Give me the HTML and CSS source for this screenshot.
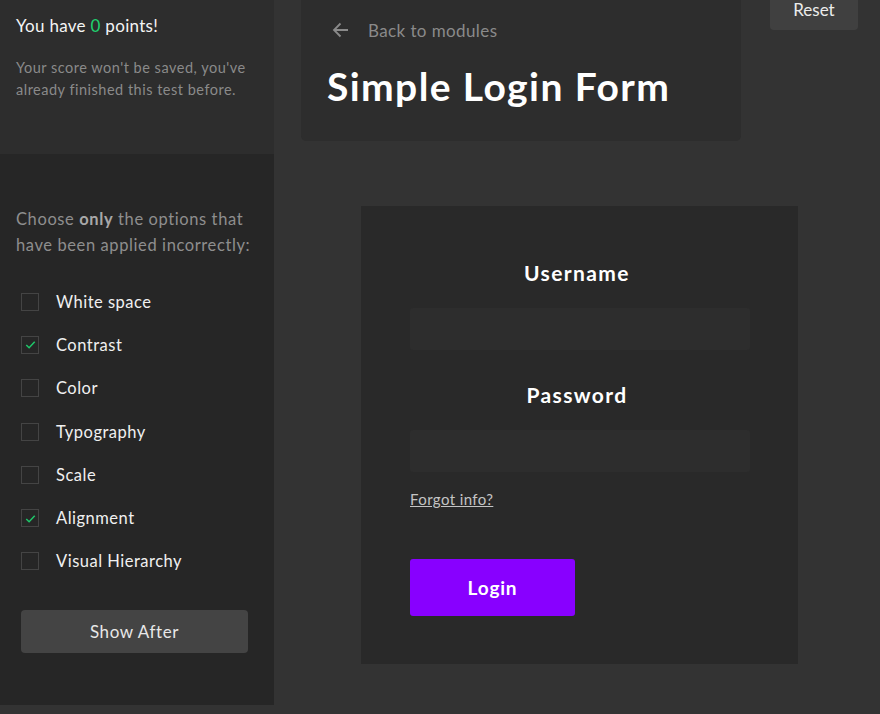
FILE: index.html
```html
<!DOCTYPE html>
<html lang="en">
<head>
    <meta charset="UTF-8">
    <meta name="viewport" content="width=device-width, initial-scale=1.0">
    <title>Simple Login Form</title>
    <link rel="stylesheet" href="styles.css">
</head>
<body>
    <div class="page">
        <aside class="sidebar">
            <div class="score">
                <p class="score-title">You have <span class="points">0</span> points!</p>
                <p class="score-note">Your score won't be saved, you've already finished this test before.</p>
            </div>
            <div class="options">
                <p class="options-intro">Choose <b>only</b> the options that have been applied incorrectly:</p>
                <ul class="option-list">
                    <li class="option"><span class="box"></span>White space</li>
                    <li class="option checked"><span class="box"><svg viewBox="0 0 16 16"><path d="M3.5 8.5l3 3 6-6.5"/></svg></span>Contrast</li>
                    <li class="option"><span class="box"></span>Color</li>
                    <li class="option"><span class="box"></span>Typography</li>
                    <li class="option"><span class="box"></span>Scale</li>
                    <li class="option checked"><span class="box"><svg viewBox="0 0 16 16"><path d="M3.5 8.5l3 3 6-6.5"/></svg></span>Alignment</li>
                    <li class="option"><span class="box"></span>Visual Hierarchy</li>
                </ul>
                <button class="show-after">Show After</button>
            </div>
        </aside>

        <main class="main">
            <div class="top">
                <div class="header-card">
                    <a class="back" href="#">
                        <svg viewBox="0 0 20 20"><path d="M17 10H3.5M9.5 3.5L3 10l6.5 6.5"/></svg>
                        Back to modules
                    </a>
                    <h1 class="title">Simple Login Form</h1>
                </div>
                <button class="reset">Reset</button>
            </div>

            <div class="login-card">
                <label class="field-label">Username</label>
                <div class="field"></div>
                <label class="field-label">Password</label>
                <div class="field"></div>
                <a class="forgot" href="#">Forgot info?</a>
                <button class="login">Login</button>
            </div>
        </main>
    </div>
</body>
</html>
```

FILE: styles.css
```css
* {
    box-sizing: border-box;
    margin: 0;
    padding: 0;
}

body {
    background: #333333;
    font-family: "Lato", "Noto Sans", sans-serif;
    letter-spacing: 0.5px;
    height: 714px;
    overflow: hidden;
}

.page {
    display: flex;
    align-items: flex-start;
}

/* barra lateral */
.sidebar {
    width: 274px;
    flex-shrink: 0;
    height: 705px;
    background: #262626;
}

.score {
    height: 154px;
    background: #2d2d2d;
    padding: 15px 16px 0;
}

.score-title {
    color: #f4f4f4;
    font-size: 17px;
    line-height: 22px;
    letter-spacing: 0.3px;
}

.points {
    color: #1fd26f;
}

.score-note {
    margin-top: 20px;
    color: #8a8a8a;
    font-size: 14.5px;
    line-height: 22px;
}

.options {
    padding: 52px 16px 0 21px;
}

.options-intro {
    margin-left: -5px;
    color: #8e8e8e;
    font-size: 16.5px;
    line-height: 26px;
    letter-spacing: 0.6px;
}

.options-intro b {
    color: #a8a8a8;
}

.option-list {
    list-style: none;
    margin-top: 22px;
}

.option {
    display: flex;
    align-items: center;
    height: 43.3px;
    color: #f0f0f0;
    font-size: 16.5px;
}

.box {
    width: 18px;
    height: 18px;
    border: 1.5px solid #444444;
    margin-right: 17px;
    display: flex;
    align-items: center;
    justify-content: center;
}

.box svg {
    width: 15px;
    height: 15px;
    fill: none;
    stroke: #1fc76a;
    stroke-width: 1.6;
}

.show-after {
    margin-top: 27px;
    width: 227px;
    height: 43px;
    background: #444444;
    border: none;
    border-radius: 4px;
    color: #e8e8e8;
    font-family: inherit;
    font-size: 17px;
    letter-spacing: 0.6px;
}

/* area principal */
.main {
    flex: 1;
}

.top {
    display: flex;
    align-items: flex-start;
}

.header-card {
    margin-left: 27px;
    width: 440px;
    height: 141px;
    background: #2d2d2d;
    border-radius: 0 0 5px 5px;
    padding: 18px 26px 0;
}

.back {
    display: flex;
    align-items: center;
    color: #8a8a8a;
    font-size: 17px;
    text-decoration: none;
    height: 24px;
    letter-spacing: 0.4px;
}

.back svg {
    width: 20px;
    height: 20px;
    margin-left: 4px;
    margin-right: 17px;
    fill: none;
    stroke: #8a8a8a;
    stroke-width: 1.8;
}

.title {
    margin-top: 21px;
    color: #ffffff;
    font-size: 39px;
    font-weight: 700;
    line-height: 46px;
    letter-spacing: 1.4px;
}

.reset {
    margin-left: 29px;
    margin-top: -12px;
    width: 88px;
    height: 42px;
    background: #404040;
    border: none;
    border-radius: 4px;
    color: #ececec;
    font-family: inherit;
    font-size: 17px;
}

.login-card {
    margin: 65px 0 0 87px;
    width: 437px;
    height: 458px;
    background: #292929;
    padding: 52px 48px 0 49px;
    display: flex;
    flex-direction: column;
}

.field-label {
    text-align: center;
    color: #ffffff;
    font-size: 21px;
    font-weight: 700;
    line-height: 30px;
    margin-bottom: 20px;
    letter-spacing: 1.4px;
    padding-right: 6px;
}

.field {
    height: 42px;
    flex-shrink: 0;
    background: #2d2d2d;
    border-radius: 3px;
    margin-bottom: 30px;
}

.forgot {
    margin-top: -13px;
    align-self: flex-start;
    color: #c4c4c4;
    font-size: 15px;
    line-height: 20px;
    letter-spacing: 0.4px;
}

.login {
    margin-top: 50px;
    width: 165px;
    height: 57px;
    flex-shrink: 0;
    background: #8800ff;
    border: none;
    border-radius: 3px;
    color: #ffffff;
    font-family: inherit;
    font-size: 19px;
    font-weight: 700;
    letter-spacing: 0.8px;
}
```
